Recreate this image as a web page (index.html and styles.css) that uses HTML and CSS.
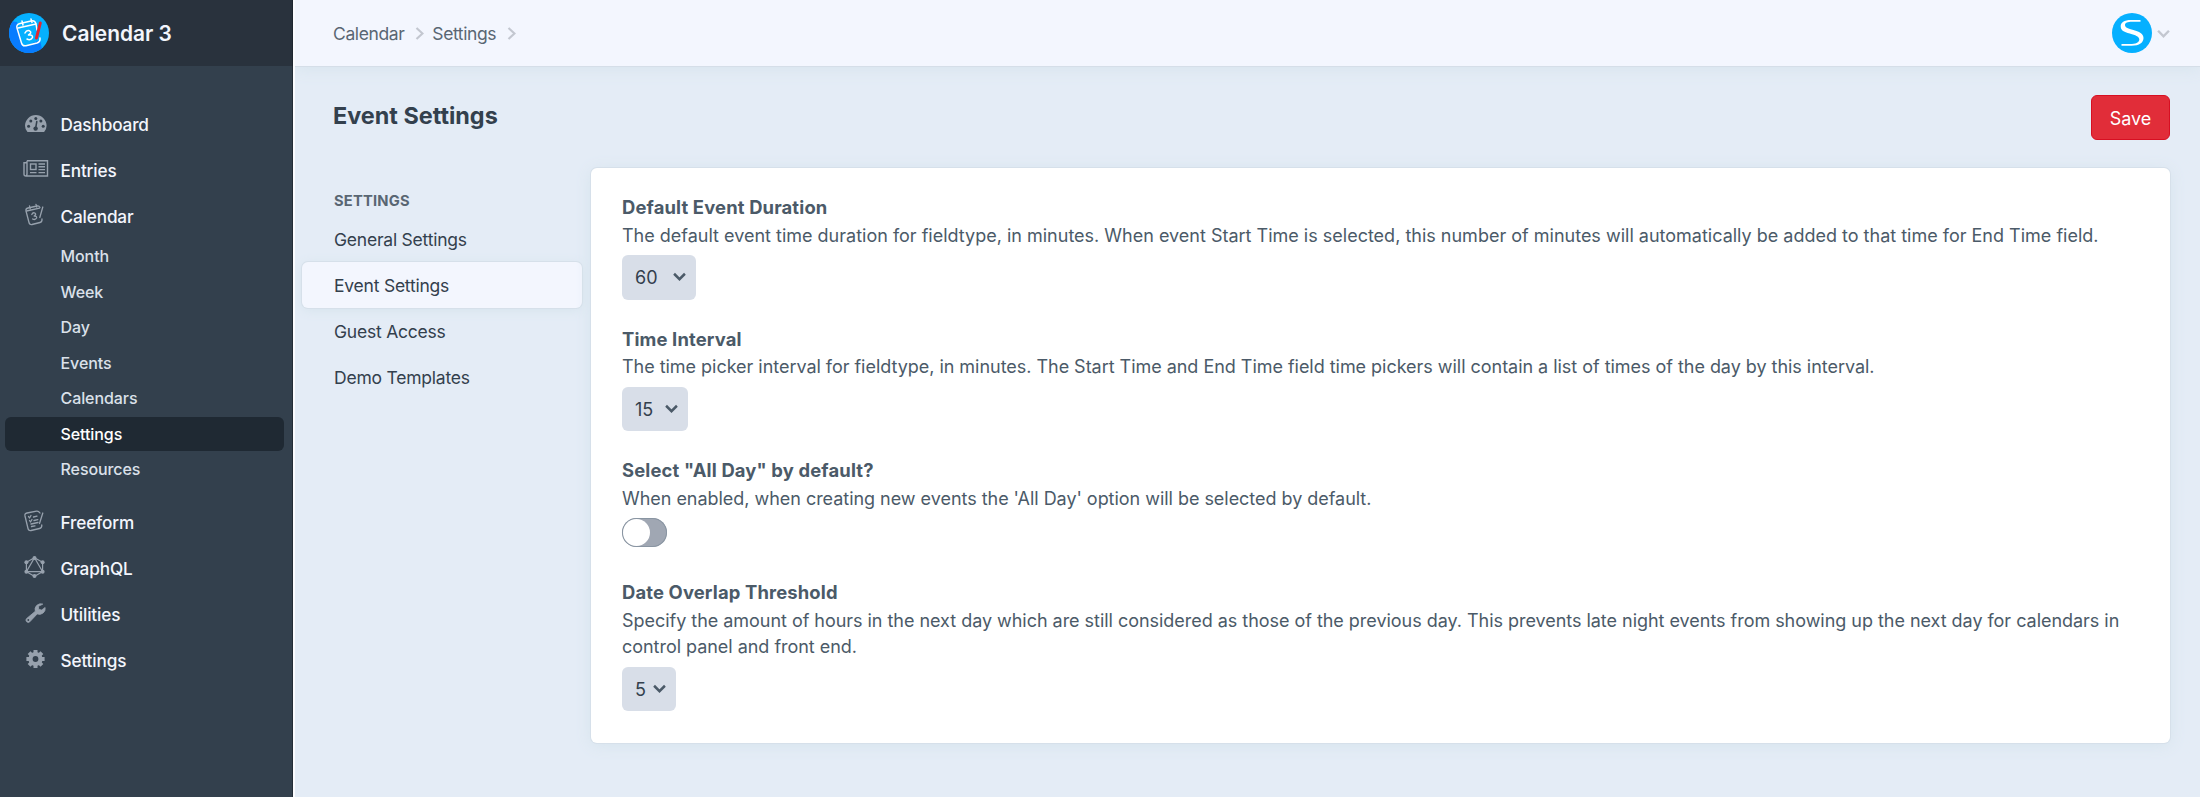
FILE: index.html
```html
<!DOCTYPE html>
<html lang="en">
<head>
<meta charset="utf-8">
<title>Event Settings</title>
<link rel="stylesheet" href="styles.css">
</head>
<body>
<div class="app">
  <aside class="sidebar">
    <div class="brand">
      <svg class="brand-icon" viewBox="0 0 40 40">
        <defs><clipPath id="disc"><circle cx="20" cy="20" r="20"/></clipPath></defs>
        <circle cx="20" cy="20" r="20" fill="#05b0ff"/>
        <path d="M0 8 L8 9 L14 34 L31 27 L33 36 L20 42 L-2 36 Z" fill="#087cff" clip-path="url(#disc)"/>
        <g fill="none" stroke="#fff" stroke-width="1.5" stroke-linecap="round" stroke-linejoin="round">
          <path d="M28 17 L27 11 Q26 7 22 8 L11 10.500 Q7 11.500 8 15 L12.500 30 Q13.500 33.500 17 32.700 L28 30 Q31.500 29 31 25"/>
          <path d="M9 15 L27 11 M13 8 L14 12 M22 6 L23 9.500"/>
          <path d="M16 20 Q17.500 16.800 20.500 17.800 Q23.500 19.600 19.500 22 Q24 21.500 23.500 24.500 Q21.500 28 18 26"/>
        </g>
        <path d="M31.300 10 L27.500 25" stroke="#e4262f" stroke-width="3" stroke-linecap="round"/>
      </svg>
      <span class="brand-name">Calendar 3</span>
    </div>
    <nav class="nav">
      <a class="nav-item">
        <svg class="icon icon-gauge" viewBox="0 0 28 28"><path d="M5.500 22 Q3 19.500 3 15.800 A10.800 10.800 0 0 1 24.600 15.800 Q24.600 19.500 22.100 22 Z" fill="currentColor"/><g class="holes"><circle cx="6.600" cy="16.200" r="1.500"/><circle cx="8.800" cy="10.900" r="1.500"/><circle cx="13.800" cy="8.600" r="1.500"/><circle cx="18.900" cy="10.900" r="1.500"/><circle cx="21.200" cy="16.200" r="1.500"/><circle cx="13.600" cy="18.600" r="2.200"/></g><path class="needle" d="M13.700 18 L14.800 11.500"/></svg>
        <span>Dashboard</span>
      </a>
      <a class="nav-item">
        <svg class="icon" viewBox="0 0 28 28"><g fill="none" stroke="currentColor" stroke-width="1.400"><path d="M5 4.700 H25.500 V20 H4 Q2 20 2 18 V6.700 H5 M5 4.700 V17.500 Q5 20 3.700 20"/><rect x="8.500" y="8" width="5.500" height="5.500"/><path d="M16.500 8 H23 M16.500 10.800 H23 M16.500 13.600 H23 M8 16.600 H14.500 M16.500 16.600 H23"/></g></svg>
        <span>Entries</span>
      </a>
      <a class="nav-item">
        <svg class="icon" viewBox="0 0 28 28"><g fill="none" stroke="currentColor" stroke-width="1.300" stroke-linecap="round" stroke-linejoin="round"><path d="M18 5.500 Q17 3.500 15 4 L6 6 Q3.500 6.500 4 9 L7 20.500 Q7.500 23 10 22.500 L18 20.500 Q20.300 20 20 17"/><path d="M4.500 9 L17.500 6.200 M7.500 4 L8.200 6.700 M14 2.500 L14.700 5 M20.800 5 L17.800 15.500"/><path d="M9.800 12.500 Q10.800 10.200 12.800 11 Q14.800 12.500 12.100 14 Q15.100 13.800 14.600 16 Q13.300 18.300 10.600 17"/></g></svg>
        <span>Calendar</span>
      </a>
      <div class="subnav">
        <a class="subnav-item">Month</a>
        <a class="subnav-item">Week</a>
        <a class="subnav-item">Day</a>
        <a class="subnav-item">Events</a>
        <a class="subnav-item">Calendars</a>
        <a class="subnav-item selected">Settings</a>
        <a class="subnav-item">Resources</a>
      </div>
      <a class="nav-item">
        <svg class="icon" viewBox="0 0 28 28"><g fill="none" stroke="currentColor" stroke-width="1.300" stroke-linecap="round" stroke-linejoin="round"><path d="M18 4 Q16.500 1.800 14.500 2.200 L5 4 Q2.500 4.500 3 7 L6 19.500 Q6.500 22 9 21.500 L17.500 19.500 Q20 19 19.800 16"/><path d="M6.500 7.500 L7.500 9 L9 6.500 M7.500 11.500 L8.500 13 L10 10.500 M11.500 8 L15 7.200 M12 11.500 L15.800 10.700 M9 15 L16 13.500 M9.500 17.500 L13 16.800 M20.800 4 L17.500 14.500"/></g></svg>
        <span>Freeform</span>
      </a>
      <a class="nav-item">
        <svg class="icon" viewBox="0 0 28 28"><path d="M12.500 2.700 L20.600 7.300 V16.700 L12.500 21.300 L4.400 16.700 V7.300 Z M12.500 2.700 L20.600 16.700 H4.400 Z" fill="none" stroke="currentColor" stroke-width="1.200"/><g fill="currentColor"><circle cx="12.500" cy="2.900" r="2"/><circle cx="20.600" cy="7.300" r="2"/><circle cx="20.600" cy="16.700" r="2"/><circle cx="12.500" cy="21.100" r="2"/><circle cx="4.400" cy="16.700" r="2"/><circle cx="4.400" cy="7.300" r="2"/></g></svg>
        <span>GraphQL</span>
      </a>
      <a class="nav-item">
        <svg class="icon" viewBox="0 0 28 28"><path d="M20.800 3.100 A5.800 5.800 0 0 0 13.300 10.300 L4.600 17.600 Q3.200 19 4.500 20.600 Q6.300 22.300 7.800 20.800 L15.200 12.900 A5.800 5.800 0 0 0 23.100 6.500 L19.700 9 L16.700 8.400 L16.500 5.300 Z" fill="currentColor" stroke="currentColor" stroke-width=".8"/><circle class="hole" cx="6.300" cy="19" r=".9"/></svg>
        <span>Utilities</span>
      </a>
      <a class="nav-item">
        <svg class="icon" viewBox="0 0 28 28"><circle cx="13.500" cy="12" r="5" fill="none" stroke="currentColor" stroke-width="4.200"/><g stroke="currentColor" stroke-width="4"><path d="M13.500 2.900 V6 M13.500 18 V21.100 M4.400 12 H7.500 M19.500 12 H22.600 M7.100 5.600 L9.300 7.800 M17.700 16.200 L19.900 18.400 M7.100 18.400 L9.300 16.200 M17.700 7.800 L19.900 5.600"/></g></svg>
        <span>Settings</span>
      </a>
    </nav>
  </aside>

  <main class="main">
    <header class="topbar">
      <div class="crumbs">
        <span class="crumb">Calendar</span>
        <svg class="crumb-arrow" viewBox="0 0 9 13"><path d="M1.500 1 L7.500 6.500 L1.500 12"/></svg>
        <span class="crumb">Settings</span>
        <svg class="crumb-arrow" viewBox="0 0 9 13"><path d="M1.500 1 L7.500 6.500 L1.500 12"/></svg>
      </div>
      <div class="account">
        <svg class="avatar" viewBox="0 0 40 40"><circle cx="20" cy="20" r="20" fill="#05b0ff"/><path d="M28.500 7 H19 C12 7 8.700 9.500 8.700 13.500 C8.700 18.500 14 19.500 20 21.200 C25 22.700 27.300 24 27.300 26.500 C27.300 29.700 23.500 31 18 31 H9.500 V32.700 H19.500 C27.500 32.700 31.500 29.500 31.500 25 C31.500 20.500 27.500 18.700 20.500 16.700 C15.500 15.300 13 14.300 13 12 C13 9.600 15.500 8.700 20 8.700 H28.500 Z" fill="#fff"/></svg>
        <svg class="account-arrow" viewBox="0 0 12 9"><path d="M1 1.500 L6 6.700 L11 1.500"/></svg>
      </div>
    </header>

    <div class="titlebar">
      <h1 class="title">Event Settings</h1>
      <button class="save">Save</button>
    </div>

    <div class="content">
      <nav class="tabs">
        <h2 class="tabs-heading">SETTINGS</h2>
        <a class="tab">General Settings</a>
        <a class="tab active">Event Settings</a>
        <a class="tab">Guest Access</a>
        <a class="tab">Demo Templates</a>
      </nav>

      <section class="card">
        <div class="field">
          <h3 class="label">Default Event Duration</h3>
          <p class="hint hint-wide">The default event time duration for fieldtype, in minutes. When event Start Time is selected, this number of minutes will automatically be added to that time for End Time field.</p>
          <div class="select select-60"><span>60</span><svg class="chevron" viewBox="0 0 12 9"><path d="M1 1.500 L6 6.500 L11 1.500"/></svg></div>
        </div>
        <div class="field">
          <h3 class="label">Time Interval</h3>
          <p class="hint">The time picker interval for fieldtype, in minutes. The Start Time and End Time field time pickers will contain a list of times of the day by this interval.</p>
          <div class="select select-15"><span>15</span><svg class="chevron" viewBox="0 0 12 9"><path d="M1 1.500 L6 6.500 L11 1.500"/></svg></div>
        </div>
        <div class="field field-toggle">
          <h3 class="label">Select "All Day" by default?</h3>
          <p class="hint">When enabled, when creating new events the 'All Day' option will be selected by default.</p>
          <div class="toggle"><span class="knob"></span></div>
        </div>
        <div class="field">
          <h3 class="label">Date Overlap Threshold</h3>
          <p class="hint">Specify the amount of hours in the next day which are still considered as those of the previous day. This prevents late night events from showing up the next day for calendars in<br>control panel and front end.</p>
          <div class="select select-5"><span>5</span><svg class="chevron" viewBox="0 0 12 9"><path d="M1 1.500 L6 6.500 L11 1.500"/></svg></div>
        </div>
      </section>
    </div>
  </main>
</div>
</body>
</html>
```

FILE: styles.css
```css
* { box-sizing: border-box; }

body {
  margin: 0;
  font-family: Inter, "Liberation Sans", sans-serif;
  font-size: 18px;
  color: #33404d;
  background: #e4ecf6;
}

h1, h2, h3, p { margin: 0; }

.app { display: flex; width: 2200px; height: 797px; overflow: hidden; }

/* Sidebar */
.sidebar {
  position: relative;
  z-index: 1;
  flex: none;
  width: 295px;
  background: #33404d;
  border-right: 2px solid #fbfcff;
  box-shadow: inset -1px 0 0 #242d37;
}
.brand {
  display: flex;
  align-items: center;
  gap: 13px;
  height: 66px;
  padding-left: 9px;
  background: #29323d;
  box-shadow: inset -1px 0 0 #1f2730;
}
.brand-icon { width: 40px; height: 40px; }
.brand-name { font-size: 20.9px; font-weight: 600; color: #f3f6fd; }

.nav { padding-top: 35px; color: #f3f6fd; }
.nav-item {
  display: flex;
  align-items: center;
  gap: 10.5px;
  height: 46px;
  padding-left: 22px;
  font-weight: 500;
  font-size: 17.2px;
  letter-spacing: -0.15px;
}
.icon { width: 28px; height: 28px; color: #97a1ad; }
.holes, .hole { fill: #33404d; }
.needle { stroke: #33404d; stroke-width: 1.5; stroke-linecap: round; }

.subnav { padding: 0 9px 12px 5px; }
.subnav-item {
  display: flex;
  align-items: center;
  height: 34px;
  margin-bottom: 1.55px;
  padding-left: 55.5px;
  border-radius: 6px;
  font-size: 16px;
  letter-spacing: -0.08px;
  font-weight: 500;
  color: #dbe1ea;
}
.subnav-item.selected { background: #1f2933; color: #fff; }

/* Top bar */
.main { flex: 1; min-width: 0; }
.topbar {
  display: flex;
  align-items: center;
  justify-content: space-between;
  height: 66px;
  padding: 0 30px 0 38px;
  background: #f3f6fe;
  box-shadow: 0 0 0 1px #d5dee8, 0 2px 16px #d5e3ec;
}
.crumbs { display: flex; align-items: center; }
.crumb { font-size: 17.5px; letter-spacing: -0.4px; color: #596673; }
.crumb-arrow { width: 9px; height: 13px; margin: 0 8px 0 11px; }
.crumb-arrow path, .account-arrow path { fill: none; stroke: #c3c7d0; stroke-width: 2.2; }
.account { display: flex; align-items: center; gap: 5px; }
.avatar { width: 40px; height: 40px; }
.account-arrow { width: 13px; height: 10px; margin-top: 2px; }

/* Title row */
.titlebar {
  display: flex;
  justify-content: space-between;
  height: 102px;
  padding: 28px 30px 0 38px;
}
.title { font-size: 23.4px; font-weight: 700; line-height: 43px; color: #33404d; }
.save {
  width: 79px;
  height: 45px;
  margin-top: 0.5px;
  border: 1px solid #d70f22;
  border-radius: 6px;
  background: #e12d39;
  color: #fff;
  font-family: inherit;
  font-size: 18px;
  padding: 2px 0 0;
}

/* Content */
.content { display: flex; gap: 9px; padding: 0 30px 0 7px; }
.tabs { flex: none; width: 280px; padding-top: 20px; }
.tabs-heading {
  height: 28px;
  padding-left: 32px;
  font-size: 14.7px;
  letter-spacing: 0.2px;
  line-height: 27px;
  font-weight: 700;
  color: #596673;
}
.tab {
  display: flex;
  align-items: center;
  height: 46px;
  padding-left: 32px;
  border-radius: 6px;
  font-size: 17.5px;
  letter-spacing: -0.22px;
  color: #33404d;
}
.tab.active {
  background: #f3f6fe;
  box-shadow: 0 0 0 1px #d6e0ea, 0 2px 12px #d5e3ec;
}
.card {
  flex: 1;
  height: 575px;
  padding: 25px 31px 0;
  border-radius: 6px;
  background: #fff;
  box-shadow: 0 0 0 1px #d6e0ea, 0 2px 16px #d5e3ec;
}
.field { margin-bottom: 25px; }
.field-toggle { margin-bottom: 31px; }
.label { padding-bottom: 1px; font-size: 18.4px; letter-spacing: 0.15px; line-height: 28.5px; font-weight: 700; color: #4b5a68; }
.hint { margin-bottom: 6px; font-size: 18px; letter-spacing: -0.033px; line-height: 26.5px; color: #4b5a68; white-space: nowrap; }
.hint-wide { letter-spacing: 0; }
.select {
  display: flex;
  align-items: center;
  justify-content: space-between;
  height: 44.5px;
  padding: 0 10px 0 13px;
  border-radius: 6px;
  background: #d8dee8;
  font-size: 18px;
  color: #33404d;
}
.select span { padding-top: 1px; }
.select-60 { width: 74px; }
.select-15 { width: 66px; }
.select-5 { width: 54px; }
.chevron { width: 13px; height: 10px; }
.chevron path { fill: none; stroke: #4b5a68; stroke-width: 2.3; }
.toggle {
  width: 45px;
  height: 29px;
  padding: 1px;
  border-radius: 15px;
  background: #a0a7b3;
  box-shadow: inset 0 0 0 1px #8995a2;
}
.knob { display: block; width: 27px; height: 27px; border-radius: 50%; background: #fff; }
```
